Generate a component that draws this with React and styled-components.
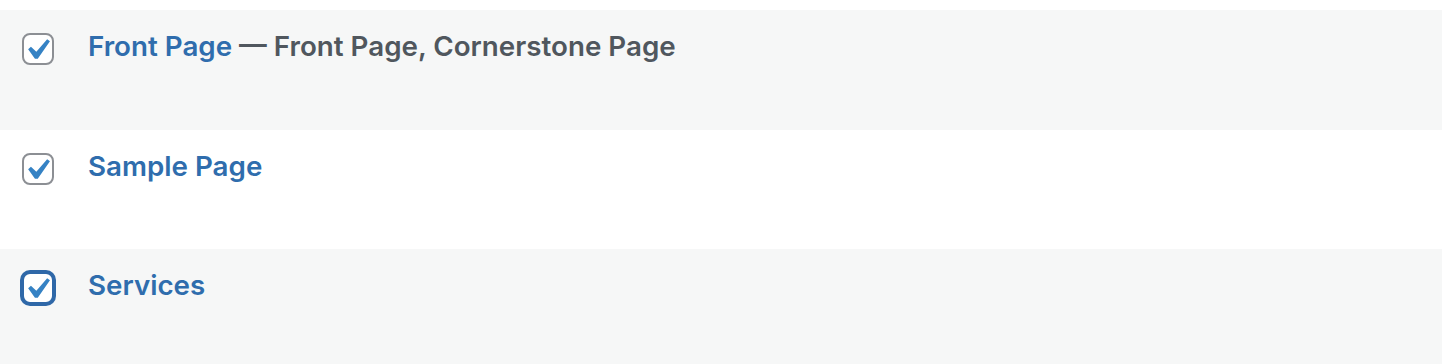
import React from 'react';
import styled, { createGlobalStyle } from 'styled-components';

const COLORS = {
  rowAlt: '#f6f7f7',
  white: '#ffffff',
  link: '#2f6dad',
  state: '#50575e',
  border: '#8c8f94',
  focus: '#2f68a8',
  check: '#3582c4',
};

const GlobalStyle = createGlobalStyle`
  html, body {
    margin: 0;
    padding: 0;
    background: ${COLORS.white};
  }
  body {
    font-family: Inter, 'Noto Sans', 'Liberation Sans', sans-serif;
  }
`;

const Table = styled.div`
  padding-top: 10px;
  display: flex;
  flex-direction: column;
`;

const Row = styled.div`
  display: flex;
  align-items: flex-start;
  height: ${(p) => p.height}px;
  padding-left: 22px;
  box-sizing: border-box;
  background: ${(p) => (p.alt ? COLORS.rowAlt : COLORS.white)};
`;

const CheckCell = styled.div`
  padding-top: 23px;
  width: 66px;
  flex-shrink: 0;
`;

const CheckBox = styled.span`
  position: relative;
  display: block;
  width: 32px;
  height: 32px;
  box-sizing: border-box;
  border: 2px solid ${(p) => (p.focused ? COLORS.focus : COLORS.border)};
  border-radius: 8px;
  background: ${COLORS.white};
  box-shadow: ${(p) => (p.focused ? `0 0 0 2px ${COLORS.focus}` : 'none')};

  svg {
    position: absolute;
    left: -8px;
    top: -6px;
    width: 42px;
    height: 42px;
  }
`;

const TitleCell = styled.div`
  padding-top: 17px;
  font-size: 27.75px;
  font-weight: 600;
  line-height: 1.4;
  color: ${COLORS.state};
`;

const RowTitle = styled.a`
  color: ${COLORS.link};
  text-decoration: none;
`;

const PostState = styled.span`
  color: ${COLORS.state};
`;

const Check = ({ focused }) => (
  <CheckBox focused={focused}>
    <svg viewBox="0 0 20 20">
      <path d="M14.83 4.89l1.34.94-5.81 8.38H9.02L5.78 9.67l1.34-1.25 2.57 2.4z" fill={COLORS.check} />
    </svg>
  </CheckBox>
);

const pages = [
  { title: 'Front Page', states: ['Front Page', 'Cornerstone Page'], height: 120 },
  { title: 'Sample Page', states: [], height: 119 },
  { title: 'Services', states: [], height: 115, focused: true },
];

const App = () => (
  <>
    <GlobalStyle />
    <Table>
      {pages.map((page, i) => (
        <Row key={page.title} alt={i % 2 === 0} height={page.height}>
          <CheckCell>
            <Check focused={page.focused} />
          </CheckCell>
          <TitleCell>
            <RowTitle href="#">{page.title}</RowTitle>
            {page.states.length > 0 && (
              <>
                {' — '}
                {page.states.map((s, j) => (
                  <React.Fragment key={s}>
                    {j > 0 && ', '}
                    <PostState>{s}</PostState>
                  </React.Fragment>
                ))}
              </>
            )}
          </TitleCell>
        </Row>
      ))}
    </Table>
  </>
);

export default App;
